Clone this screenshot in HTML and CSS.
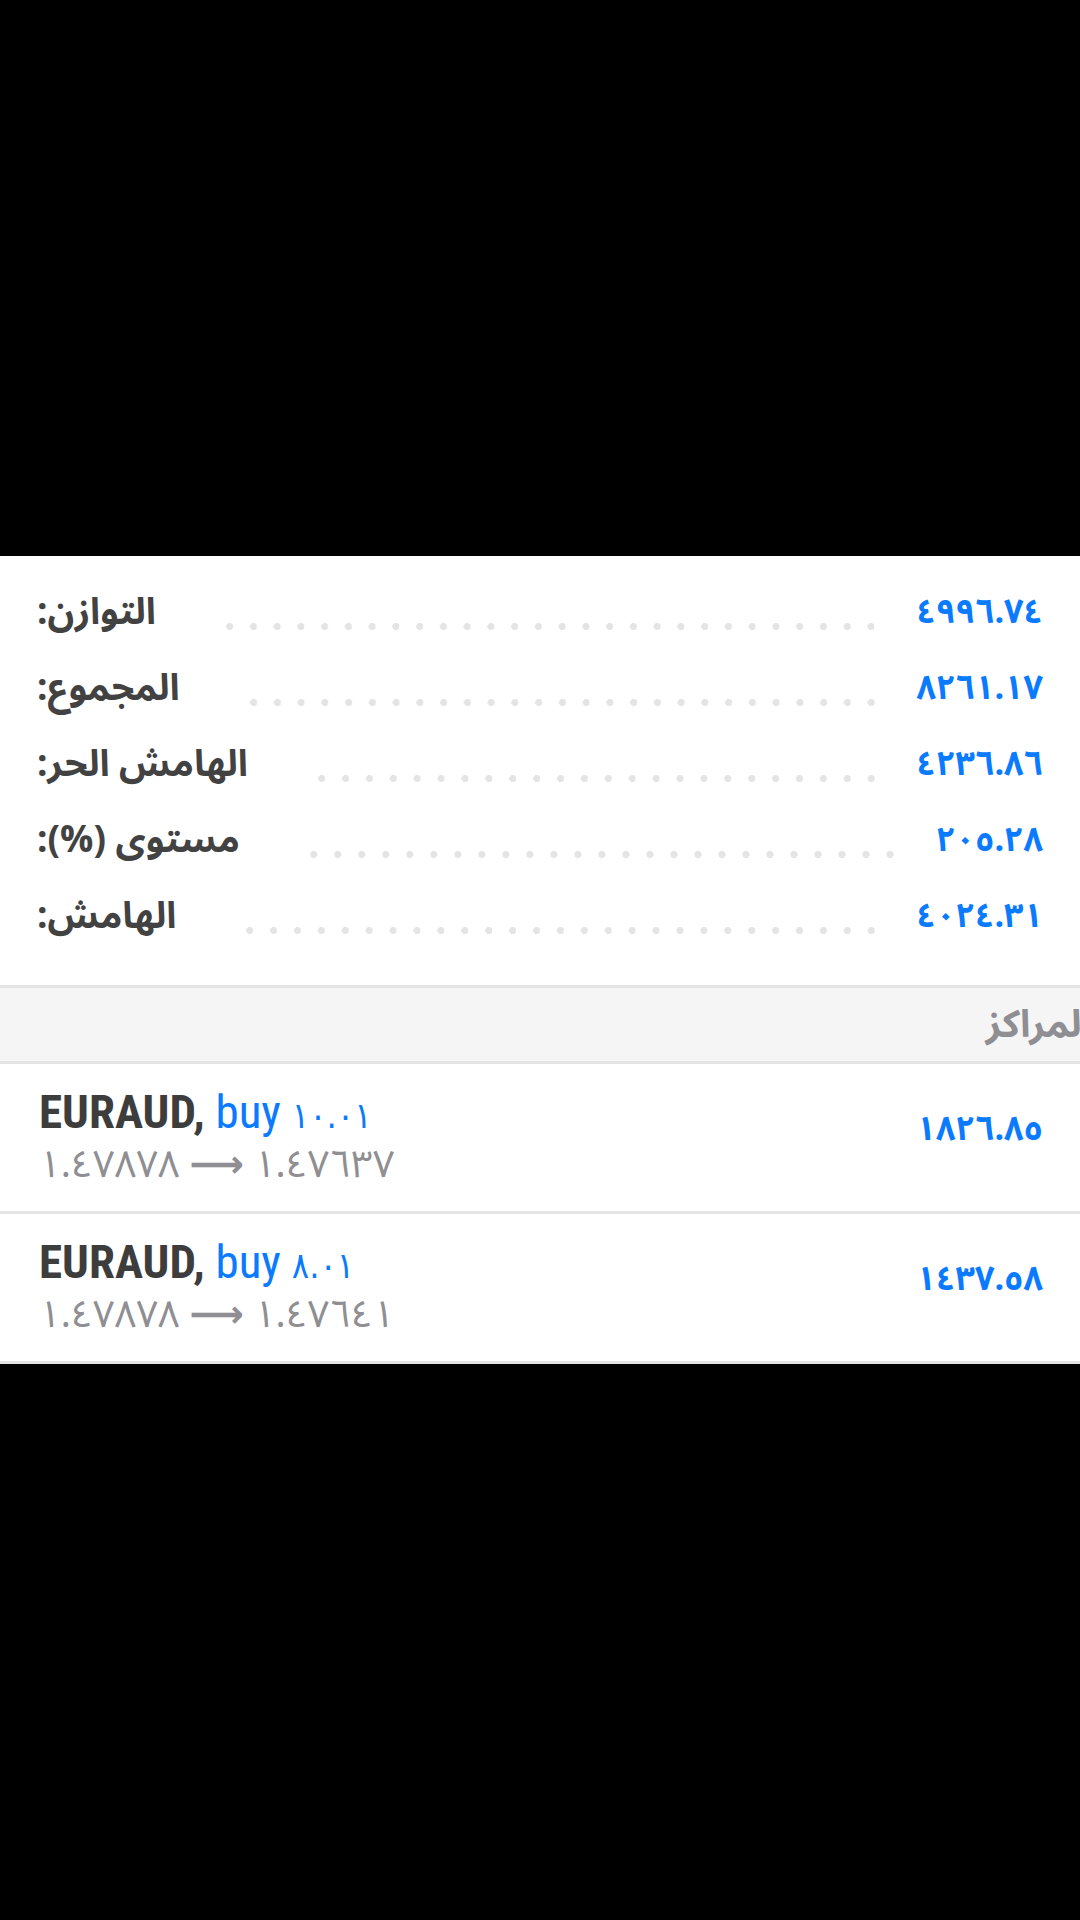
FILE: index.html
```html
<!doctype html>
<html lang="ar">
  <head>
    <title>الحساب</title>
    <meta charset="UTF-8" />
    <meta name="viewport" content="width=device-width, initial-scale=1" />
    <link rel="stylesheet" href="styles.css">
  </head>

  <body>
    <div class="panel">
      <div class="summary">
        <div class="stat">
          <span class="stat-label" dir="rtl">التوازن:</span>
          <span class="leader"></span>
          <span class="stat-value">٤٩٩٦.٧٤</span>
        </div>
        <div class="stat">
          <span class="stat-label" dir="rtl">المجموع:</span>
          <span class="leader"></span>
          <span class="stat-value">٨٢٦١.١٧</span>
        </div>
        <div class="stat">
          <span class="stat-label" dir="rtl">الهامش الحر:</span>
          <span class="leader"></span>
          <span class="stat-value">٤٢٣٦.٨٦</span>
        </div>
        <div class="stat">
          <span class="stat-label" dir="rtl">مستوى (%):</span>
          <span class="leader"></span>
          <span class="stat-value">٢٠٥.٢٨</span>
        </div>
        <div class="stat">
          <span class="stat-label" dir="rtl">الهامش:</span>
          <span class="leader"></span>
          <span class="stat-value">٤٠٢٤.٣١</span>
        </div>
      </div>

      <div class="section-head">
        <span class="section-title" dir="rtl">المراكز</span>
      </div>

      <div class="position">
        <div class="position-info">
          <div class="position-title">
            <span class="symbol">EURAUD,</span>
            <span class="side">buy</span>
            <span class="volume">١٠.٠١</span>
          </div>
          <div class="position-prices">
            <span class="price">١.٤٧٨٧٨</span>
            <span class="arrow">&#10230;</span>
            <span class="price">١.٤٧٦٣٧</span>
          </div>
        </div>
        <div class="position-profit">١٨٢٦.٨٥</div>
      </div>

      <div class="position">
        <div class="position-info">
          <div class="position-title">
            <span class="symbol">EURAUD,</span>
            <span class="side">buy</span>
            <span class="volume">٨.٠١</span>
          </div>
          <div class="position-prices">
            <span class="price">١.٤٧٨٧٨</span>
            <span class="arrow">&#10230;</span>
            <span class="price">١.٤٧٦٤١</span>
          </div>
        </div>
        <div class="position-profit">١٤٣٧.٥٨</div>
      </div>
    </div>
  </body>
</html>
```

FILE: styles.css
```css
body {
  margin: 0;
  padding: 556px 0 0 0;
  background-color: #000000;
  font-family: 'Noto Sans Arabic', 'Noto Naskh Arabic', 'DejaVu Sans', sans-serif;
}

.panel {
  background-color: #ffffff;
}

/* account summary */

.summary {
  padding: 18px 37px 31px 37px;
}

.stat {
  display: flex;
  align-items: center;
  height: 76px;
}

.stat-label {
  color: #424242;
  font-size: 37px;
  font-weight: bold;
}

.leader {
  flex: 1;
  height: 7px;
  margin: 28px 34px 0 62px;
  background-image: radial-gradient(circle, #e4e4e4 3.3px, transparent 3.8px);
  background-size: 23.4px 7px;
  background-repeat: space no-repeat;
}

.stat-value {
  color: #0a7aff;
  font-size: 34px;
  font-weight: bold;
}

/* positions */

.section-head {
  display: flex;
  justify-content: flex-end;
  align-items: center;
  height: 73px;
  overflow: hidden;
  background-color: #f5f5f5;
  border-top: 3px solid #e4e4e4;
  border-bottom: 3px solid #e4e4e4;
}

.section-title {
  margin-right: -12px;
  color: #8e8e93;
  font-size: 38px;
  font-weight: bold;
}

.position {
  display: flex;
  justify-content: space-between;
  align-items: center;
  height: 147px;
  padding: 0 37px 0 39px;
  border-bottom: 3px solid #e4e4e4;
}

.position-title {
  font-family: 'Roboto Condensed', 'Liberation Sans Narrow', Roboto, sans-serif;
  font-stretch: condensed;
  font-size: 47px;
  line-height: 50px;
}

.symbol {
  color: #3d3d3d;
  font-weight: bold;
}

.side {
  color: #0a7aff;
}

.volume {
  color: #0a7aff;
  font-family: 'DejaVu Sans', sans-serif;
  font-size: 36px;
}

.position-prices {
  color: #8e8e93;
  font-size: 38px;
  line-height: 46px;
}

.price {
  unicode-bidi: isolate;
}

.arrow {
  font-family: 'DejaVu Sans', sans-serif;
  font-weight: bold;
}

.position-profit {
  margin-bottom: 18px;
  color: #0a7aff;
  font-size: 34px;
  font-weight: bold;
}
```
